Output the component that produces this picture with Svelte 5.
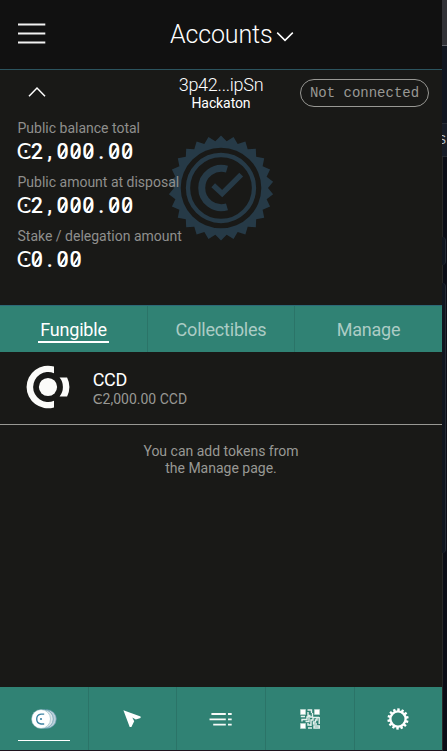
<script>
  const balances = [
    { label: 'Public balance total', value: 'Ͼ2,000.00' },
    { label: 'Public amount at disposal', value: 'Ͼ2,000.00' },
    { label: 'Stake / delegation amount', value: 'Ͼ0.00' }
  ];
  const tabs = ['Fungible', 'Collectibles', 'Manage'];
  const nav = ['tokens', 'send', 'log', 'receive', 'settings'];

  function star(n, outer, inner) {
    let d = '';
    for (let i = 0; i < n * 2; i++) {
      const r = i % 2 ? inner : outer;
      const a = (Math.PI * i) / n - Math.PI / 2;
      d += (i ? 'L' : 'M') + (r * Math.cos(a)).toFixed(2) + ' ' + (r * Math.sin(a)).toFixed(2);
    }
    return d + 'Z';
  }
  const badge = star(26, 52.5, 47) + 'M-40.3 0A40.3 40.3 0 1 0 40.3 0A40.3 40.3 0 1 0 -40.3 0Z';
  const teeth = Array.from({ length: 14 }, (_, i) => (i * 360) / 14 + 3);
</script>

<div class="screen">
  <main class="wallet">
    <header>
      <svg class="burger" width="28" height="22" viewBox="0 0 28 22"><path d="M0 1.4H27.3M0 10.4H27.3M0 19.4H27.3" /></svg>
      <h1>Accounts<svg width="18" height="12" viewBox="0 0 18 12"><path d="M1.2 1.6L9 9.4L16.8 1.6" /></svg></h1>
    </header>

    <section class="account">
      <svg class="seal" width="106" height="106" viewBox="-53 -53 106 106">
        <path d={badge} fill="#263a47" fill-rule="evenodd" />
        <g fill="none" stroke="#263a47">
          <circle r="33" stroke-width="4.3" />
          <path d="M6 -18.9A19.7 19.7 0 1 0 6 18.9" stroke-width="7" />
          <path d="M-7.8 -2.8L1.2 5.6L20.2 -13.4" stroke-width="5.4" />
        </g>
      </svg>
      <div class="top">
        <svg class="up" width="18" height="12" viewBox="0 0 18 12"><path d="M1 10.2L9 2L17 10.2" /></svg>
        <div class="who"><span class="address">3p42...ipSn</span><span class="name">Hackaton</span></div>
        <span class="status">Not connected</span>
      </div>
      <div class="balances">
        {#each balances as b}
          <div class="balance">
            <div class="label">{b.label}</div>
            <div class="value">{#each b.value as c}<span class:zero={c === '0'}>{c}</span>{/each}</div>
          </div>
        {/each}
      </div>
    </section>

    <nav class="tabs">
      {#each tabs as t, i}
        <div class="tab" class:active={i === 0}><span>{t}</span></div>
      {/each}
    </nav>

    <section class="token">
      <svg width="44" height="44" viewBox="-22 -22 44 44" fill="#fbfbf9">
        <path d="M6 -20.4A21.3 21.3 0 1 0 6 20.4V13.8A15 15 0 1 1 6 -13.8Z" />
        <circle r="9.1" />
        <path d="M11.6 -9.4H19.1A21.3 21.3 0 0 1 19.1 9.4H11.6A15 15 0 0 0 11.6 -9.4Z" />
      </svg>
      <div class="info"><span class="ticker">CCD</span><span class="amount">Ͼ2,000.00 CCD</span></div>
    </section>

    <p class="hint">You can add tokens from<br />the Manage page.</p>

    <nav class="bottom">
      {#each nav as n, i}
        <div class="item" class:current={i === 0}>
          {#if n === 'tokens'}
            <svg width="26" height="20" viewBox="0 0 26 20">
              <circle cx="16" cy="10" r="9.3" fill="#bdd0da" stroke="#5e97aa" stroke-width=".7" />
              <circle cx="13" cy="10" r="9.3" fill="#dce6eb" stroke="#5e97aa" stroke-width=".7" />
              <circle cx="10" cy="10" r="9.5" fill="#fff" stroke="#79aab5" stroke-width=".5" />
              <path d="M13.2 5.1H10A5 5 0 0 0 10 15H13.2" fill="none" stroke="#3d83a3" stroke-width="1.4" />
              <circle cx="10" cy="10" r="1.1" fill="#3d83a3" />
            </svg>
          {:else if n === 'send'}
            <svg width="18" height="18" viewBox="0 0 18 18"><path d="M.4 .3L17.6 6.5V8.1L12.8 9.5L9.3 7.5L11.2 11.3L8.4 17H6.7Z" fill="#fff" /></svg>
          {:else if n === 'log'}
            <svg width="23" height="14" viewBox="0 0 23 14"><path d="M2.4 2H16.8M19 2H22.7M.5 7.3H16.8M19 7.3H22.7M4.2 12.6H16.8M19 12.6H22.7" fill="none" stroke="#f6faf8" stroke-width="1.8" /></svg>
          {:else if n === 'receive'}
            <svg width="20" height="20" viewBox="0 0 20 20">
              <g fill="#fff" stroke="#b9d7cf" stroke-width=".7"><path d="M.5 .5H5.5V5.5H.5ZM14.5 .5H19.5V5.5H14.5ZM.5 14.5H5.5V19.5H.5Z" /></g>
              <path d="M7.5 1H11.5V4M8 3V6.5H10.5M12.5 4V8H7V10.5H2V12.5M.8 7.5H5M5.5 12.5H9V9M8 14V16H11M8 19H12M11 17V11H13V8.5H19M17 9V11H15.5V13H13.5V15H17M19.2 8V15M14 17H19.3V19H14Z" fill="none" stroke="#e4f1ed" stroke-width="1.4" />
            </svg>
          {:else}
            <svg width="22" height="22" viewBox="-11 -11 22 22">
              <circle r="7.6" fill="none" stroke="#fff" stroke-width="2.3" />
              {#each teeth as a}<rect x="-1.2" y="-10.6" width="2.4" height="3" fill="#fff" transform={`rotate(${a})`} />{/each}
            </svg>
          {/if}
        </div>
      {/each}
    </nav>
  </main>

  <aside class="backdrop">
    <div class="bar"></div>
    <div class="gap"></div>
    <div class="peek">S</div>
    <div class="lower"><div class="card small"></div><div class="card"></div></div>
  </aside>
</div>

<style>
  :global(body) { background: #0d0e16; }
  .screen { display: flex; width: 447px; height: 751px; overflow: hidden; background: #20141f; font-family: Roboto, 'DejaVu Sans', sans-serif; }
  .wallet { width: 442px; height: 750px; flex: none; display: flex; flex-direction: column; background: #191917; color: #fff; }
  svg { display: block; flex: none; }
  header { height: 69px; box-sizing: content-box; border-bottom: 1px solid #2c545f; background: #111; display: grid; grid-template-columns: 18px 28px 1fr; }
  .burger { grid-column: 2; margin-top: 23px; fill: none; stroke: #f2f2f2; stroke-width: 2; }
  h1 { margin: 0 0 0 124px; display: flex; align-items: center; gap: 4px; font-size: 25px; font-weight: 300; line-height: 70px; letter-spacing: -.15px; }
  h1 svg { margin-top: 4px; fill: none; stroke: #fff; stroke-width: 1.5; }
  .account { height: 235px; position: relative; }
  .seal { position: absolute; left: 168px; top: 65px; }
  .top { height: 47px; display: grid; grid-template-columns: 147px 148px 147px; position: relative; }
  .up { margin: 16px 0 0 28px; fill: none; stroke: #fff; stroke-width: 1.5; }
  .who { display: flex; flex-direction: column; align-items: center; padding-top: 5px; }
  .address { font-size: 18px; line-height: 20px; font-weight: 300; letter-spacing: -.25px; }
  .name { font-size: 14px; line-height: 17px; letter-spacing: -.1px; }
  .status { box-sizing: border-box; width: 129px; height: 28px; margin: 9px 0 0 5px; border: 1px solid #989894; border-radius: 14px; color: #989894; font: 14px/27px 'Liberation Mono', monospace; text-align: center; white-space: nowrap; }
  .balances { position: relative; padding-left: 17.5px; }
  .balance { height: 54px; }
  .label { font-size: 14px; line-height: 22px; color: #8f8f8d; }
  .value { display: flex; font-size: 21.5px; line-height: 26px; font-weight: 500; }
  .value span { width: 12.9px; display: flex; justify-content: center; position: relative; }
  .zero::after { content: ''; position: absolute; left: 5.7px; top: 8px; width: 1.6px; height: 11px; background: #fff; transform: rotate(32deg); }
  .tabs { height: 46px; border-top: 1px solid #2c6a78; background: #308274; display: grid; grid-template-columns: 148px 147px 147px; }
  .tab { border-right: 1px solid #2b7468; text-align: center; font-size: 18px; line-height: 21px; padding-top: 13px; color: #acccc5; letter-spacing: -.2px; }
  .tab:last-child { border-right: 0; }
  .tab span { display: inline-block; padding: 0 2px 1px; border-bottom: 2px solid transparent; }
  .tab.active { color: #fff; }
  .tab.active span { border-color: #fff; }
  .token { height: 72px; border-bottom: 1px solid #989894; display: flex; align-items: center; padding: 0 0 0 26.3px; gap: 22.5px; }
  .token svg { margin-top: -2px; }
  .info { display: flex; flex-direction: column; padding-top: 2px; }
  .ticker { font-size: 18px; line-height: 20px; letter-spacing: -.4px; }
  .amount { font-size: 14px; line-height: 18px; color: #989894; }
  .hint { margin: 18px 0 0; text-align: center; font-size: 14px; line-height: 17px; color: #989894; }
  .bottom { margin-top: auto; height: 63px; background: #308274; display: grid; grid-template-columns: 89px 88px 89px 89px 87px; }
  .item { display: flex; justify-content: center; align-items: center; border-right: 1px solid #2b7468; position: relative; }
  .item:last-child { border-right: 0; }
  .item svg { margin-left: -1px; }
  .current::after { content: ''; position: absolute; left: 18px; right: 18px; bottom: 9px; height: 1px; background: #fff; }
  .backdrop { width: 5px; display: flex; flex-direction: column; background: #0b0d16; box-shadow: inset 1px 0 #282828; }
  .bar { height: 45px; background: #323237; border-bottom: 1px solid #62646b; }
  .gap { height: 77px; background: #111620; }
  .peek { height: 32px; border: solid #292d34; border-width: 1px 0; background: #171d28; color: #bdc5ce; font: 12px/32px 'Liberation Sans', sans-serif; overflow: hidden; text-indent: -4px; }
  .lower { flex: 1; padding-top: 80px; }
  .card { width: 3px; height: 270px; border-right: 1px solid #252b34; border-radius: 0 4px 4px 0; background: #111620; }
  .card.small { height: 28px; margin-bottom: 18px; }
</style>
